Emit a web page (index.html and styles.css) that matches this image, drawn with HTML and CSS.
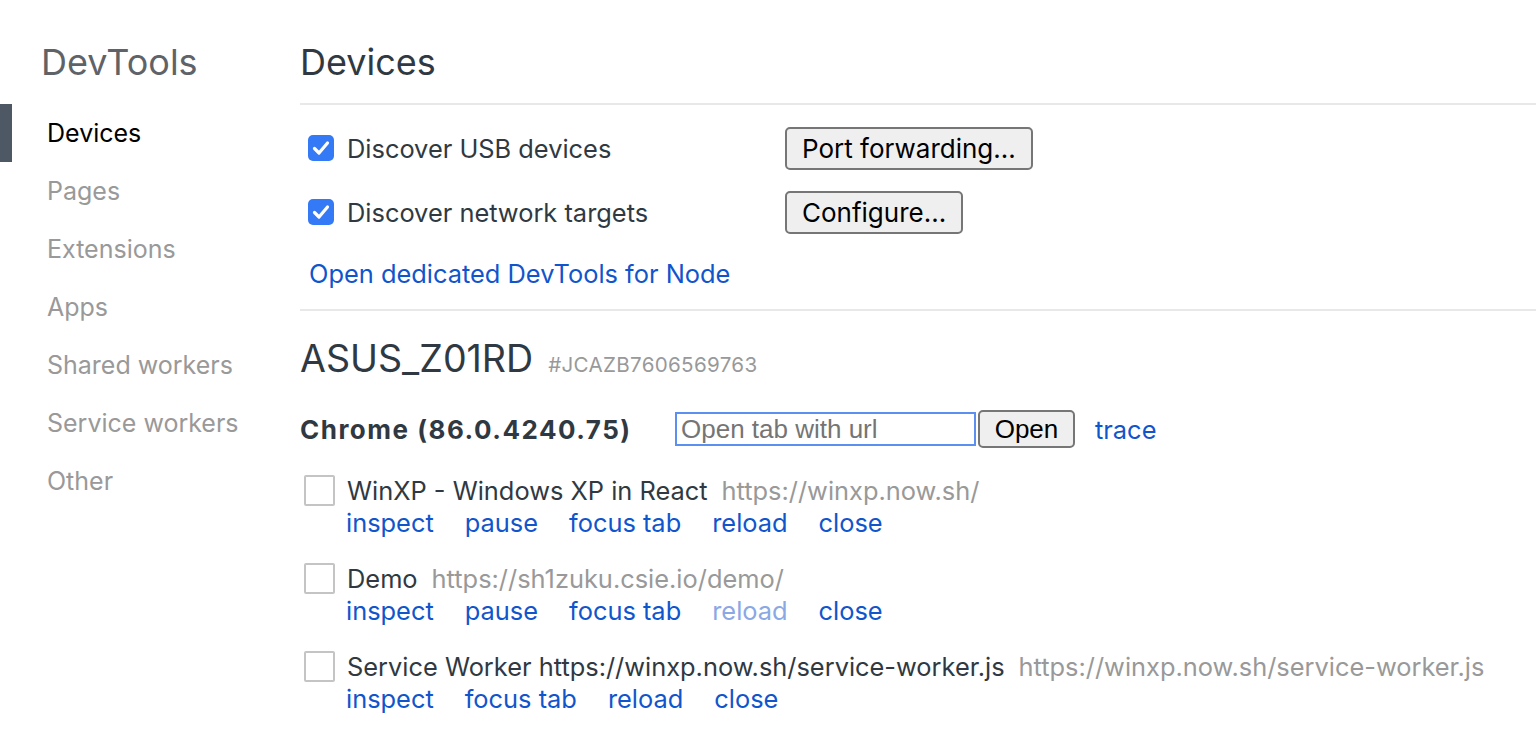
FILE: index.html
```html
<!DOCTYPE html>
<html>
<head>
<meta charset="utf-8">
<link rel="stylesheet" href="styles.css">
</head>
<body>
<div class="page">
  <nav class="sidebar">
    <div class="brand">DevTools</div>
    <ul class="nav">
      <li class="nav-item selected">Devices</li>
      <li class="nav-item">Pages</li>
      <li class="nav-item">Extensions</li>
      <li class="nav-item">Apps</li>
      <li class="nav-item">Shared workers</li>
      <li class="nav-item">Service workers</li>
      <li class="nav-item">Other</li>
    </ul>
  </nav>
  <main class="main">
    <header class="header"><h1 class="title">Devices</h1></header>
    <section class="config">
      <div class="config-row">
        <label class="check-label"><span class="cb-checked"><svg viewBox="0 0 26 26" width="26" height="26"><path d="M6.5 13.5 L11 18 L19.5 8" fill="none" stroke="#fff" stroke-width="3.2" stroke-linecap="round" stroke-linejoin="round"/></svg></span>Discover USB devices</label>
        <button class="btn">Port forwarding...</button>
      </div>
      <div class="config-row">
        <label class="check-label"><span class="cb-checked"><svg viewBox="0 0 26 26" width="26" height="26"><path d="M6.5 13.5 L11 18 L19.5 8" fill="none" stroke="#fff" stroke-width="3.2" stroke-linecap="round" stroke-linejoin="round"/></svg></span>Discover network targets</label>
        <button class="btn">Configure...</button>
      </div>
      <div class="node-row"><a class="link">Open dedicated DevTools for Node</a></div>
    </section>
    <section class="device">
      <div class="device-head"><span class="device-name">ASUS_Z01RD</span><span class="device-serial">#JCAZB7606569763</span></div>
      <div class="browser-line">
        <span class="browser-name">Chrome (86.0.4240.75)</span>
        <input class="url-input" placeholder="Open tab with url">
        <button class="btn btn-open">Open</button>
        <a class="link trace">trace</a>
      </div>
      <div class="target">
        <div class="target-title"><span class="cb-empty"></span><span class="t-name">WinXP - Windows XP in React</span><span class="t-url">https://winxp.now.sh/</span></div>
        <div class="actions"><a class="link">inspect</a><a class="link">pause</a><a class="link">focus tab</a><a class="link">reload</a><a class="link">close</a></div>
      </div>
      <div class="target">
        <div class="target-title"><span class="cb-empty"></span><span class="t-name">Demo</span><span class="t-url">https://sh1zuku.csie.io/demo/</span></div>
        <div class="actions"><a class="link">inspect</a><a class="link">pause</a><a class="link">focus tab</a><a class="link disabled">reload</a><a class="link">close</a></div>
      </div>
      <div class="target">
        <div class="target-title"><span class="cb-empty"></span><span class="t-name">Service Worker https://winxp.now.sh/service-worker.js</span><span class="t-url">https://winxp.now.sh/service-worker.js</span></div>
        <div class="actions"><a class="link">inspect</a><a class="link">focus tab</a><a class="link">reload</a><a class="link">close</a></div>
      </div>
    </section>
  </main>
</div>
</body>
</html>
```
FILE: styles.css
```css
html, body {
  margin: 0;
  padding: 0;
  background: #fff;
}
body {
  font-family: Inter, "Noto Sans", sans-serif;
  color: #303942;
  overflow: hidden;
}
.page {
  display: flex;
  width: 1536px;
  height: 752px;
}
.sidebar {
  width: 300px;
  flex: none;
}
.brand {
  font-size: 36px;
  line-height: 44px;
  color: #5f6368;
  padding: 40px 0 0 41px;
  height: 64px;
}
.nav {
  list-style: none;
  margin: 0;
  padding: 0;
}
.nav-item {
  height: 58px;
  line-height: 58px;
  font-size: 25px;
  color: #999;
  padding-left: 47px;
}
.nav-item.selected {
  color: #000;
  box-shadow: inset 12px 0 0 #4e5764;
}
.main {
  flex: 1;
  min-width: 0;
}
.header {
  border-bottom: 2px solid #e8e8e8;
  box-sizing: border-box;
  height: 105px;
  padding-top: 40px;
}
.title {
  margin: 0;
  font-size: 36px;
  line-height: 44px;
  font-weight: 400;
  color: #303942;
}
.config {
  padding: 11px 0 7px 0;
  border-bottom: 2px solid #e8e8e8;
}
.config-row {
  height: 64px;
  display: flex;
  align-items: center;
}
.check-label {
  width: 477px;
  display: flex;
  align-items: center;
  font-size: 25.4px;
  padding-left: 8px;
}
.cb-checked {
  width: 26px;
  height: 26px;
  border-radius: 5px;
  background: #3479f6;
  margin-right: 13px;
  display: flex;
}
.btn {
  font-family: Inter, sans-serif;
  font-size: 26px;
  color: #000;
  background: #efefef;
  border: 2px solid #767676;
  border-radius: 5px;
  height: 43px;
  padding: 0 15px;
  margin: 0;
  box-sizing: border-box;
}
.node-row {
  height: 58px;
  display: flex;
  align-items: center;
  padding-left: 9px;
}
.link {
  color: #1155cc;
  font-size: 25.4px;
  text-decoration: none;
}
.link.disabled {
  color: #8aa8e4;
}
.device-head {
  padding-top: 24px;
  height: 48px;
  display: flex;
  align-items: baseline;
}
.device-name {
  font-size: 37.6px;
  line-height: 48px;
  color: #303942;
}
.device-serial {
  font-size: 20.6px;
  color: #999;
  margin-left: 15px;
  letter-spacing: 0.3px;
}
.browser-line {
  margin-top: 23px;
  height: 46px;
  display: flex;
  align-items: center;
}
.browser-name {
  font-size: 26px;
  font-weight: 700;
  letter-spacing: 1.5px;
  width: 375px;
}
.url-input {
  width: 301px;
  height: 34px;
  box-sizing: border-box;
  border: 2px solid #5b8ff0;
  margin: 0 2px 0 0;
  padding: 0 4px;
  font-family: "Liberation Sans", Arial, sans-serif;
  font-size: 26px;
  color: #000;
  outline: none;
}
.url-input::placeholder {
  color: #757575;
}
.btn-open {
  height: 38px;
  padding: 0 12px;
  font-family: "Liberation Sans", Arial, sans-serif;
  width: 97px;
}
.trace {
  margin-left: 20px;
}
.target {
  margin-top: 22px;
}
.target + .target {
  margin-top: 24px;
}
.target-title {
  height: 32px;
  display: flex;
  align-items: center;
  font-size: 25.4px;
  white-space: nowrap;
}
.cb-empty {
  width: 31px;
  height: 31px;
  box-sizing: border-box;
  border: 2px solid #c4c4c4;
  border-radius: 2px;
  margin-left: 4px;
  margin-right: 12px;
  flex: none;
}
.t-url {
  color: #999;
  margin-left: 14px;
}
.actions {
  height: 32px;
  display: flex;
  align-items: center;
  padding-left: 46px;
  gap: 31px;
}
```
